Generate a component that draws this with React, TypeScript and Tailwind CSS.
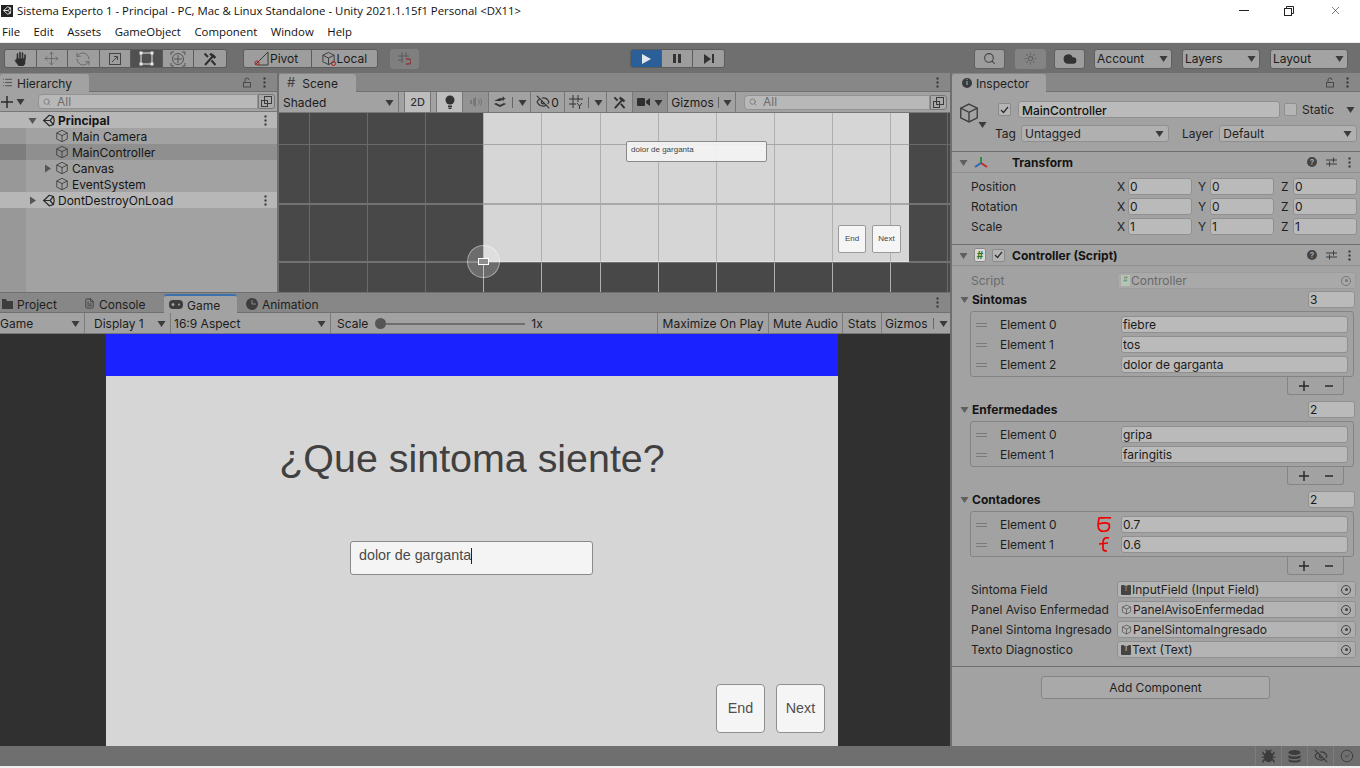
import type { ReactNode } from "react";
import {
  Bug,
  CircleCheck,
  Cloud,
  EyeOff,
  FileText,
  List,
  Move,
  RefreshCcw,
  Search,
  Sun,
  X,
} from "lucide-react";

function Tri({ dir = "down", className = "" }: { dir?: "down" | "right"; className?: string }) {
  return (
    <svg width="9" height="9" viewBox="0 0 9 9" className={className} fill="currentColor">
      {dir === "down" ? <path d="M0.5 2h8l-4 6z" /> : <path d="M2 0.5v8l6-4z" />}
    </svg>
  );
}

function Cube({ size = 16, className = "" }: { size?: number; className?: string }) {
  return (
    <svg width={size} height={size} viewBox="0 0 16 16" fill="none" stroke="currentColor" strokeWidth="1" className={className}>
      <path d="M8 1.5l6 3v7l-6 3-6-3v-7z" />
      <path d="M2 4.5l6 3 6-3M8 7.5v7" />
    </svg>
  );
}

function UnityIcon({ className = "" }: { className?: string }) {
  return (
    <svg width="13" height="13" viewBox="0 0 16 16" fill="none" stroke="currentColor" strokeWidth="1.5" className={className}>
      <path d="M9 1.5l5 1.5 1 5-1 5-5 1.5-7-6.5z" />
      <path d="M2 8h8l4-5M10 8l4 5" />
    </svg>
  );
}

function Dots({ className = "" }: { className?: string }) {
  return (
    <svg width="3" height="11" viewBox="0 0 3 11" fill="currentColor" className={className}>
      <rect x="0.5" y="0.5" width="2" height="2" />
      <rect x="0.5" y="4.5" width="2" height="2" />
      <rect x="0.5" y="8.5" width="2" height="2" />
    </svg>
  );
}

function ToolsIcon({ size = 14 }: { size?: number }) {
  return (
    <svg width={size} height={size} viewBox="0 0 14 14" fill="none" stroke="#2f2f2f">
      <path d="M2 13L11 3" strokeWidth="2" />
      <path d="M8 1l5 4-1.500 1.500-5-4z" fill="#2f2f2f" strokeWidth="0.500" />
      <path d="M1.500 1.500L5 5M8.500 8.500l4 4.500" strokeWidth="2" />
    </svg>
  );
}

function LockIcon() {
  return (
    <svg width="10" height="11" viewBox="0 0 10 11" fill="none" stroke="#4a4a4a" strokeWidth="1">
      <rect x="1.5" y="5.5" width="7" height="4.5" />
      <path d="M3 5.5V3a2 2 0 0 1 4 0" />
    </svg>
  );
}

function SearchField({ className = "" }: { className?: string }) {
  return (
    <div className={`flex items-center h-[15px] ${className}`}>
      <div className="flex-1 h-full bg-[#b8b8b8] border border-[#929292] rounded-l-[4px] flex items-center pl-[4px] gap-[6px] text-[#6c6c6c] text-[12px]">
        <Search size={8} strokeWidth={2} />
        <span className="leading-none">All</span>
      </div>
      <div className="w-[17px] h-full bg-[#a9a9a9] border border-[#777] rounded-r-[3px] flex items-center justify-center">
        <svg width="11" height="11" viewBox="0 0 11 11" fill="none" stroke="#3c3c3c" strokeWidth="1">
          <rect x="0.5" y="4.5" width="6" height="6" />
          <rect x="3.5" y="0.5" width="7" height="7" />
        </svg>
      </div>
    </div>
  );
}

function ToolBtn({ children, active, last }: { children: ReactNode; active?: boolean; last?: boolean }) {
  return (
    <div
      className={`w-[31.7px] h-full flex items-center justify-center ${last ? "" : "border-r border-[#5c5c5c]"} ${
        active ? "bg-[#505050] text-[#e8e8e8]" : "bg-[#9d9d9d] text-[#3a3a3a]"
      }`}
    >
      {children}
    </div>
  );
}

function TopDrop({ label, width }: { label: string; width: string }) {
  return (
    <div className={`${width} h-[20px] bg-[#a3a3a3] border border-[#606060] rounded-[3px] flex items-center justify-between pl-[2px] pr-[3px] text-[#1c1c1c]`}>
      <span>{label}</span>
      <Tri className="text-[#3b3b3b]" />
    </div>
  );
}

function Toolbar() {
  return (
    <div className="h-[30px] bg-[#6f6f6f] flex items-center pl-[4px] pt-[1px] shrink-0">
      <div className="flex h-[19px] w-[223px] border border-[#5c5c5c] rounded-[3px] overflow-hidden">
        <ToolBtn>
          <svg width="15" height="15" viewBox="0 0 15 15" fill="#2e2e2e" stroke="#2e2e2e" strokeLinecap="round">
            <path d="M4 7.500h8V13l-2 2H6L2 10z" strokeWidth="0.500" />
            <path d="M4.500 8V3M7 7V1.500M9.500 7V2M12 8V4" strokeWidth="1.600" />
          </svg>
        </ToolBtn>
        <ToolBtn><Move size={15} strokeWidth={1} className="text-[#555]" /></ToolBtn>
        <ToolBtn><RefreshCcw size={16} strokeWidth={1} className="text-[#555]" /></ToolBtn>
        <ToolBtn>
          <svg width="14" height="14" viewBox="0 0 14 14" fill="none" stroke="#444" strokeWidth="1">
            <rect x="1.5" y="1.5" width="11" height="11" />
            <path d="M4 10l5-5M6 4.5h3.500v3.500" />
          </svg>
        </ToolBtn>
        <ToolBtn active>
          <svg width="15" height="15" viewBox="0 0 15 15" fill="none" stroke="#e8e8e8" strokeWidth="1">
            <rect x="2" y="2" width="11" height="11" />
            <rect x="1" y="1" width="2" height="2" fill="#e8e8e8" />
            <rect x="12" y="1" width="2" height="2" fill="#e8e8e8" />
            <rect x="1" y="12" width="2" height="2" fill="#e8e8e8" />
            <rect x="12" y="12" width="2" height="2" fill="#e8e8e8" />
          </svg>
        </ToolBtn>
        <ToolBtn>
          <svg width="16" height="16" viewBox="0 0 16 16" fill="none" stroke="#555" strokeWidth="1">
            <circle cx="8" cy="8" r="5.500" />
            <path d="M8 4v8M4 8h8" />
            <path d="M1 4V1h3M12 1h3v3M1 12v3h3M15 12v3h-3" />
          </svg>
        </ToolBtn>
        <ToolBtn last><ToolsIcon /></ToolBtn>
      </div>

      <div className="flex h-[19px] w-[135px] ml-[16px] border border-[#5c5c5c] rounded-[3px] overflow-hidden text-[#1c1c1c]">
        <div className="flex-1 bg-[#9d9d9d] border-r border-[#5c5c5c] flex items-center pl-[10px] gap-[1px]">
          <svg width="15" height="15" viewBox="0 0 15 15" fill="none" strokeWidth="1">
            <path d="M1 14L14 1v13H4" stroke="#3a3a3a" />
            <circle cx="3" cy="12" r="2" stroke="#b01c1c" />
          </svg>
          <span className="pt-[1px]">Pivot</span>
        </div>
        <div className="flex-1 bg-[#9d9d9d] flex items-center pl-[9px] gap-[1px]">
          <span className="relative">
            <Cube size={15} className="text-[#3a3a3a]" />
            <span className="absolute right-0 bottom-0 w-[5px] h-[5px] rounded-full border border-[#b01c1c]" />
          </span>
          <span className="pt-[1px]">Local</span>
        </div>
      </div>

      <div className="w-[29px] h-[20px] ml-[12px] bg-[#7f7f7f] rounded-[3px] flex items-center justify-center">
        <svg width="13" height="13" viewBox="0 0 13 13" fill="none" strokeWidth="1">
          <path d="M4 0v11M8 0v5M0 4h11M0 8h5" stroke="#5c5c5c" />
          <path d="M8 7h2.500a2 2 0 0 1 0 5H8" stroke="#8b3b3b" strokeWidth="1.500" />
        </svg>
      </div>

      <div className="flex h-[19px] w-[95px] ml-[211px] border border-[#5c5c5c] rounded-[3px] overflow-hidden">
        <div className="w-[31px] bg-[#2a5f99] flex items-center justify-center border-r border-[#5c5c5c]">
          <svg width="9" height="10" viewBox="0 0 9 10" fill="#e2e8ef"><path d="M0 0l9 5-9 5z" /></svg>
        </div>
        <div className="w-[31px] bg-[#9d9d9d] flex items-center justify-center gap-[2px] border-r border-[#5c5c5c]">
          <span className="w-[3px] h-[9px] bg-[#333]" />
          <span className="w-[3px] h-[9px] bg-[#333]" />
        </div>
        <div className="flex-1 bg-[#9d9d9d] flex items-center justify-center gap-[1px]">
          <svg width="7" height="10" viewBox="0 0 7 10" fill="#333"><path d="M0 0l7 5-7 5z" /></svg>
          <span className="w-[2px] h-[9px] bg-[#333]" />
        </div>
      </div>

      <div className="w-[31px] h-[20px] ml-[249px] bg-[#9d9d9d] border border-[#606060] rounded-[3px] flex items-center justify-center">
        <Search size={13} className="text-[#444]" />
      </div>
      <div className="w-[31px] h-[20px] ml-[10px] bg-[#848484] rounded-[3px] flex items-center justify-center">
        <Sun size={13} className="text-[#636363]" />
      </div>
      <div className="w-[31px] h-[20px] ml-[8px] bg-[#9d9d9d] border border-[#606060] rounded-[3px] flex items-center justify-center">
        <Cloud size={14} fill="#333" className="text-[#333]" />
      </div>
      <div className="flex gap-[10px] ml-[9px]">
        <TopDrop label="Account" width="w-[78px]" />
        <TopDrop label="Layers" width="w-[78px]" />
        <TopDrop label="Layout" width="w-[78px]" />
      </div>
    </div>
  );
}

function Tab({ icon, label, className = "", accent }: { icon?: ReactNode; label: string; className?: string; accent?: boolean }) {
  return (
    <div
      className={`h-full flex items-center gap-[4px] rounded-t-[3px] text-[#1e1e1e] ${className} ${
        accent ? "bg-[#a2a2a2] border-t-2 border-[#3a72b0]" : ""
      }`}
    >
      {icon}
      <span className="pt-[2px]">{label}</span>
    </div>
  );
}

function HierarchyRow({
  label,
  indent,
  arrow,
  cube,
  bold,
  header,
  selected,
}: {
  label: string;
  indent: string;
  arrow?: "down" | "right";
  cube?: boolean;
  bold?: boolean;
  header?: boolean;
  selected?: boolean;
}) {
  return (
    <div className={`h-[16px] flex items-center ${header ? "bg-[#b7b7b7]" : selected ? "bg-[#8f8f8f]" : "bg-transparent"}`}>
      <div className={`w-[26px] h-full shrink-0 ${header ? "" : selected ? "bg-[#7d7d7d]" : "bg-[#989898]"}`} />
      <div className={`${indent} shrink-0 flex justify-end text-[#555]`}>{arrow && <Tri dir={arrow} />}</div>
      {cube ? <Cube size={14} className="text-[#3d3d3d] shrink-0" /> : <UnityIcon className="text-[#2b2b2b] shrink-0" />}
      <span className={`ml-[3px] pt-[1px] leading-none text-[#151515] ${bold ? "font-bold" : ""}`}>{label}</span>
      {header && <Dots className="ml-auto mr-[10px] text-[#333]" />}
    </div>
  );
}

function Hierarchy() {
  return (
    <div className="w-[277px] flex flex-col bg-[#a2a2a2]">
      <div className="h-[19px] bg-[#878787] flex items-center shrink-0 border-b border-[#707070]">
        <Tab className="bg-[#a2a2a2] w-[89px] pl-[2px] -mb-[1px] h-[20px]" label="Hierarchy" icon={<List size={11} className="text-[#4a4a4a]" />} />
        <div className="ml-auto mr-[11px] flex items-center gap-[11px]">
          <LockIcon />
          <Dots className="text-[#333]" />
        </div>
      </div>
      <div className="h-[20px] bg-[#a2a2a2] border-b border-[#777] flex items-center shrink-0">
        <svg width="12" height="12" viewBox="0 0 12 12" stroke="#2c2c2c" strokeWidth="1.500" className="ml-[1px]"><path d="M6 0v12M0 6h12" /></svg>
        <Tri className="ml-[3px] text-[#3a3a3a]" />
        <SearchField className="w-[237px] ml-[13px]" />
      </div>
      <div className="flex-1 flex flex-col">
        <HierarchyRow header bold label="Principal" indent="w-[16px] pr-[5px]" arrow="down" />
        <HierarchyRow cube label="Main Camera" indent="w-[29px]" />
        <HierarchyRow cube selected label="MainController" indent="w-[29px]" />
        <HierarchyRow cube label="Canvas" indent="w-[29px] pr-[3px]" arrow="right" />
        <HierarchyRow cube label="EventSystem" indent="w-[29px]" />
        <HierarchyRow header label="DontDestroyOnLoad" indent="w-[16px] pr-[5px]" arrow="right" />
        <div className="flex-1 flex">
          <div className="w-[26px] bg-[#989898]" />
        </div>
      </div>
    </div>
  );
}

const sceneCols = [30, 88, 146, 204, 262, 321, 379, 437, 495, 553, 611];

function SceneView() {
  return (
    <div className="relative flex-1 bg-[#484848] overflow-hidden">
      <div className="absolute left-[204px] top-0 w-[426px] h-[149px] bg-[#d6d6d6]" />
      {sceneCols.map((x) => (
        <div
          key={x}
          className={`absolute top-0 bottom-0 w-px ${x >= 204 && x < 630 ? "bg-[#b0b0b0]" : "bg-[#6a6a6a]"}`}
          style={{ left: x }}
        />
      ))}
      <div className="absolute left-0 right-0 top-[31px] h-px bg-[#6a6a6a]" />
      <div className="absolute left-0 right-0 top-[90px] h-[2px] bg-[#727272]" />
      <div className="absolute left-0 right-0 top-[148px] h-[2px] bg-[#727272]" />
      <div className="absolute left-[204px] w-[426px] top-[31px] h-px bg-[#a8a8a8]" />
      <div className="absolute left-[204px] w-[426px] top-[90px] h-[2px] bg-[#a8a8a8]" />
      <div className="absolute left-[204px] w-[426px] top-[148px] h-[1px] bg-[#e2e2e2]" />
      <div className="absolute left-[668px] top-0 bottom-0 w-px bg-[#6a6a6a]" />

      <div className="absolute left-[347px] top-[28px] w-[141px] h-[21px] bg-[#f4f4f4]/90 border border-[#8a8a8a] rounded-[2px] pl-[4px] text-[8px] leading-[15px] text-[#444] font-['Liberation_Sans',sans-serif]">
        dolor de garganta
      </div>
      <div className="absolute left-[559px] top-[112px] w-[28px] h-[28px] bg-[#f5f5f5] border border-[#999] rounded-[2px] flex items-center justify-center text-[8px] text-[#444] font-['Liberation_Sans',sans-serif]">
        End
      </div>
      <div className="absolute left-[593px] top-[112px] w-[29px] h-[28px] bg-[#f5f5f5] border border-[#999] rounded-[2px] flex items-center justify-center text-[8px] text-[#444] font-['Liberation_Sans',sans-serif]">
        Next
      </div>
      <div className="absolute left-[188px] top-[132px] w-[33px] h-[33px] rounded-full bg-white/20 border border-white/40" />
      <div className="absolute left-[199px] top-[145px] w-[11px] h-[7px] border border-white bg-[#8d8d8d]" />
    </div>
  );
}

function SceneBar({ children, className = "" }: { children: ReactNode; className?: string }) {
  return <div className={`h-full flex items-center justify-center border-r border-[#777] ${className}`}>{children}</div>;
}

function Scene() {
  return (
    <div className="flex-1 flex flex-col">
      <div className="h-[19px] bg-[#878787] flex items-center shrink-0 border-b border-[#707070]">
        <Tab className="bg-[#a2a2a2] w-[77px] pl-[8px] -mb-[1px] h-[20px]" label="Scene" icon={<span className="text-[13px] leading-none text-[#3d3d3d] mr-[3px]">#</span>} />
        <Dots className="ml-auto mr-[11px] text-[#333]" />
      </div>
      <div className="h-[21px] bg-[#a2a2a2] border-b border-[#777] flex items-center shrink-0 text-[#1c1c1c]">
        <SceneBar className="w-[120px] !justify-between pl-[4px] pr-[4px]">
          <span className="pt-[1px]">Shaded</span>
          <Tri className="text-[#3b3b3b]" />
        </SceneBar>
        <div className="w-[6px] h-full border-r border-[#777]" />
        <SceneBar className="w-[26px] bg-[#bdbdbd] font-medium text-[11px] text-[#333]">2D</SceneBar>
        <div className="w-[6px] h-full border-r border-[#777]" />
        <SceneBar className="w-[26px] bg-[#bdbdbd]">
          <svg width="10" height="14" viewBox="0 0 10 14" fill="#333"><circle cx="5" cy="5" r="4.500" /><rect x="3" y="10.500" width="4" height="1.500" /><rect x="3.500" y="12.500" width="3" height="1.500" /></svg>
        </SceneBar>
        <SceneBar className="w-[26px] bg-[#939393]">
          <svg width="12" height="10" viewBox="0 0 12 10" fill="#777"><path d="M0 3h2v4H0zM3 2l3-2v10L3 8z" /><path d="M8 2a4 4 0 0 1 0 6M10 1a6 6 0 0 1 0 8" fill="none" stroke="#777" /></svg>
        </SceneBar>
        <SceneBar className="w-[42px] gap-[5px]">
          <svg width="14" height="12" viewBox="0 0 14 12" fill="#333"><path d="M1 5l6-3 3 1.500L7 5zM1 8l6 3 6-3-2-1-4 2-4-2z" /><path d="M10 0l1 2 2 .5-2 1-1 2-.5-2-2-1 2-.5z" /></svg>
          <span className="w-px h-[11px] bg-[#666]" />
          <Tri className="text-[#3b3b3b]" />
        </SceneBar>
        <SceneBar className="w-[34px] gap-[1px]">
          <EyeOff size={14} className="text-[#333]" />
          <span className="pt-[1px]">0</span>
        </SceneBar>
        <SceneBar className="w-[42px] gap-[5px]">
          <svg width="14" height="14" viewBox="0 0 14 14" fill="none" stroke="#333"><path d="M4 0v13M9 0v7M0 4h14M0 9h7M8 8l2.500 3L13 8M10.500 11v3" /></svg>
          <span className="w-px h-[11px] bg-[#666]" />
          <Tri className="text-[#3b3b3b]" />
        </SceneBar>
        <SceneBar className="w-[26px]"><ToolsIcon size={13} /></SceneBar>
        <SceneBar className="w-[35px] bg-[#8f8f8f] gap-[4px]">
          <svg width="13" height="10" viewBox="0 0 13 10" fill="#2f2f2f"><rect x="0" y="1" width="8" height="8" rx="1" /><path d="M9 4l4-3v8l-4-3z" /></svg>
          <Tri className="text-[#333]" />
        </SceneBar>
        <SceneBar className="w-[68px] gap-[4px]">
          <span className="pt-[1px]">Gizmos</span>
          <span className="w-px h-[11px] bg-[#666]" />
          <Tri className="text-[#3b3b3b]" />
        </SceneBar>
        <SearchField className="w-[203px] ml-[8px]" />
      </div>
      <SceneView />
    </div>
  );
}

function GameBar({ children, className = "" }: { children: ReactNode; className?: string }) {
  return <div className={`h-full flex items-center pt-[1px] border-r border-[#7c7c7c] ${className}`}>{children}</div>;
}

function Game() {
  return (
    <div className="flex-1 flex flex-col min-h-0">
      <div className="h-[20px] bg-[#878787] flex items-center shrink-0 border-b border-[#707070]">
        <Tab className="w-[84px] pl-[2px] pt-[2px]" label="Project" icon={<svg width="11" height="10" viewBox="0 0 11 10" fill="#3d3d3d"><path d="M0 0h4l1 2h6v8H0z" /></svg>} />
        <Tab className="w-[80px] pt-[2px]" label="Console" icon={<FileText size={11} className="text-[#3d3d3d]" />} />
        <Tab accent className="w-[73px] pl-[5px] pt-[1px] -mb-[1px] h-[21px]" label="Game" icon={
          <svg width="14" height="9" viewBox="0 0 14 9" fill="#3d3d3d"><rect x="0" y="0" width="14" height="9" rx="4" /><circle cx="4" cy="4.500" r="1.500" fill="#a2a2a2" /><circle cx="10" cy="4.500" r="1" fill="#a2a2a2" /></svg>
        } />
        <Tab className="pl-[9px] pt-[2px]" label="Animation" icon={
          <svg width="12" height="12" viewBox="0 0 12 12"><circle cx="6" cy="6" r="6" fill="#3d3d3d" /><path d="M6 2v4h4" stroke="#8a8a8a" fill="none" /></svg>
        } />
        <Dots className="ml-auto mr-[11px] text-[#333]" />
      </div>
      <div className="h-[21px] bg-[#a2a2a2] border-b border-[#777] flex items-center shrink-0 text-[#1c1c1c]">
        <GameBar className="w-[85px] justify-between pr-[4px]">
          <span>Game</span>
          <Tri className="text-[#3b3b3b]" />
        </GameBar>
        <GameBar className="w-[86px] justify-between pl-[9px] pr-[4px]">
          <span>Display 1</span>
          <Tri className="text-[#3b3b3b]" />
        </GameBar>
        <GameBar className="w-[160px] justify-between pl-[3px] pr-[4px]">
          <span>16:9 Aspect</span>
          <Tri className="text-[#3b3b3b]" />
        </GameBar>
        <GameBar className="w-[327px] pl-[6px]">
          <span>Scale</span>
          <span className="ml-[7px] w-[11px] h-[11px] rounded-full bg-[#555] shrink-0" />
          <span className="w-[139px] h-[2px] bg-[#6e6e6e]" />
          <span className="ml-[6px]">1x</span>
        </GameBar>
        <GameBar className="w-[111px] justify-center">Maximize On Play</GameBar>
        <GameBar className="w-[74px] justify-center">Mute Audio</GameBar>
        <GameBar className="w-[39px] justify-center">Stats</GameBar>
        <div className="flex-1 h-full flex items-center pt-[1px] pl-[3px] gap-[5px]">
          <span>Gizmos</span>
          <span className="w-px h-[11px] bg-[#666]" />
          <Tri className="text-[#3b3b3b]" />
        </div>
      </div>
      <div className="flex-1 bg-[#303030] flex justify-center pr-[6px] min-h-0">
        <div className="w-[732px] bg-[#d6d6d6] flex flex-col font-['Liberation_Sans',sans-serif]">
          <div className="h-[42px] bg-[#1a22ff] shrink-0" />
          <h1 className="mt-[56px] text-center text-[39.400px] leading-[52px] text-[#404040]">¿Que sintoma siente?</h1>
          <div className="mt-[57px] ml-[244px] w-[243px] h-[34px] bg-[#f4f4f4] border border-[#8a8a8a] rounded-[3px] flex items-center pl-[8px] pb-[4px] text-[14.300px] text-[#4a4a4a]">
            dolor de garganta
            <span className="w-px h-[16px] bg-[#222]" />
          </div>
          <div className="mt-auto mb-[13px] mr-[13px] flex justify-end gap-[11px]">
            <div className="w-[49px] h-[49px] bg-[#f5f5f5] border border-[#8f8f8f] rounded-[4px] flex items-center justify-center text-[14.300px] text-[#4f4f4f]">End</div>
            <div className="w-[49px] h-[49px] bg-[#f5f5f5] border border-[#8f8f8f] rounded-[4px] flex items-center justify-center text-[14.300px] text-[#4f4f4f]">Next</div>
          </div>
        </div>
      </div>
    </div>
  );
}

function Field({ value, className = "", bold }: { value?: string; className?: string; bold?: boolean }) {
  return (
    <div className={`h-[17px] bg-[#bababa] border border-[#909090] rounded-[3px] flex items-center pl-[1px] pt-[1px] text-[#1a1a1a] leading-none overflow-hidden ${bold ? "font-medium pt-[2px]" : ""} ${className}`}>
      {value}
    </div>
  );
}

function Check() {
  return (
    <svg width="9" height="8" viewBox="0 0 9 8" fill="none" stroke="#2c2c2c" strokeWidth="1.200"><path d="M1 4l2.500 2.500L8 1" /></svg>
  );
}

function CompHeader({ icon, label, check }: { icon: ReactNode; label: string; check?: boolean }) {
  return (
    <div className="h-[21px] border-b border-[#8f8f8f] flex items-center pl-[7px]">
      <Tri className="text-[#5f5f5f]" />
      <div className="w-[17px] ml-[6px] flex justify-start">{icon}</div>
      {check ? (
        <div className="w-[13px] h-[13px] ml-[1px] bg-[#b5b5b5] border border-[#8a8a8a] rounded-[2px] flex items-center justify-center">
          <Check />
        </div>
      ) : (
        <div className="w-[14px]" />
      )}
      <span className="ml-[7px] pt-[1px] font-bold text-[#141414]">{label}</span>
      <div className="ml-auto mr-[9px] flex items-center gap-[9px]">
        <span className="w-[10px] h-[10px] rounded-full bg-[#444] text-[#a2a2a2] text-[8px] font-bold flex items-center justify-center leading-none">?</span>
        <svg width="11" height="10" viewBox="0 0 11 10" stroke="#3d3d3d" fill="none"><path d="M0 3h11M0 7h11M7.500 0.500v5M3.500 4.500v5" /></svg>
        <Dots className="text-[#333] ml-[2px]" />
      </div>
    </div>
  );
}

function Vec3({ label, x, y, z }: { label: string; x: string; y: string; z: string }) {
  return (
    <div className="h-[17px] mb-[3px] flex items-center text-[#1f1f1f]">
      <span className="w-[165px] pl-[19px] pt-[1px]">{label}</span>
      <span className="w-[11px] pt-[1px]">X</span>
      <Field value={x} className="w-[64px]" />
      <span className="w-[12px] ml-[6px] pt-[1px]">Y</span>
      <Field value={y} className="w-[64px]" />
      <span className="w-[12px] ml-[7px] pt-[1px]">Z</span>
      <Field value={z} className="w-[64px]" />
    </div>
  );
}

function ListSection({ title, size, items, marks }: { title: string; size: string; items: string[]; marks?: boolean }) {
  return (
    <div className="pr-[5px]">
      <div className="h-[18px] flex items-center pl-[8px]">
        <Tri className="text-[#5f5f5f]" />
        <span className="ml-[3px] pt-[1px] font-bold text-[#141414]">{title}</span>
        <Field value={size} className="ml-auto w-[47px]" />
      </div>
      <div className="ml-[18px] mr-[1px] mt-[3px] border border-[#848484] rounded-[3px] pt-[4px]">
        {items.map((item, i) => (
          <div key={i} className="h-[17px] mb-[3px] flex items-center text-[#1f1f1f] relative">
            <span className="ml-[5px] w-[11px] h-[4px] border-y border-[#7a7a7a]" />
            <span className="ml-[13px] w-[121px] pt-[1px]">Element {i}</span>
            <Field value={item} className="flex-1 mr-[5px]" />
            {marks && (
              <svg width="15" height="16" viewBox="0 0 15 16" fill="none" stroke="#f00000" strokeWidth="1.700" className="absolute left-[126px] top-[1px]">
                {i === 0 ? (
                  <path d="M14 1C10 0 5 1 2 1L1 8c0 5 3 7 7 6 4 0 5-4 4-7-3-2-7-1-10 0" />
                ) : (
                  <path d="M12 1C8 0 6 2 6 5v7c0 2 2 2 4 2M2 7l9-1" />
                )}
              </svg>
            )}
          </div>
        ))}
      </div>
      <div className="ml-[335px] w-[57px] h-[18px] border border-t-0 border-[#848484] rounded-b-[3px] flex items-center justify-center gap-[15px] text-[#2a2a2a]">
        <svg width="10" height="10" viewBox="0 0 10 10" stroke="#2a2a2a" strokeWidth="1.500"><path d="M5 0v10M0 5h10" /></svg>
        <svg width="9" height="10" viewBox="0 0 9 10" stroke="#2a2a2a" strokeWidth="1.500"><path d="M1 5h8" /></svg>
      </div>
    </div>
  );
}

function RefRow({ label, value, icon }: { label: string; value: string; icon: ReactNode }) {
  return (
    <div className="h-[17px] mb-[3px] flex items-center text-[#1f1f1f]">
      <span className="w-[165px] pl-[19px] pt-[1px] shrink-0 whitespace-nowrap">{label}</span>
      <div className="w-[239px] h-full bg-[#b4b4b4] border border-[#909090] rounded-[3px] flex items-center relative pl-[3px] gap-[1px]">
        {icon}
        <span className="leading-none pt-[1px]">{value}</span>
        <div className="absolute right-0 top-0 bottom-0 w-[18px] bg-[#adadad] rounded-r-[3px] flex items-center justify-center">
          <span className="w-[10px] h-[10px] rounded-full border border-[#444] flex items-center justify-center">
            <span className="w-[3px] h-[3px] rounded-full bg-[#444]" />
          </span>
        </div>
      </div>
    </div>
  );
}

function Inspector() {
  const small = "text-[#4a4a4a] shrink-0";
  return (
    <div className="w-[408px] flex flex-col bg-[#a2a2a2] shrink-0">
      <div className="h-[19px] bg-[#878787] flex items-center shrink-0 border-b border-[#707070]">
        <Tab
          className="bg-[#a2a2a2] w-[94px] pl-[10px] -mb-[1px] h-[20px]"
          label="Inspector"
          icon={<span className="w-[10px] h-[10px] rounded-full bg-[#3a3a3a] text-[#a2a2a2] text-[7px] font-bold flex items-center justify-center leading-none">i</span>}
        />
        <div className="ml-auto mr-[11px] flex items-center gap-[11px]">
          <LockIcon />
          <Dots className="text-[#333]" />
        </div>
      </div>

      <div className="h-[60px] border-b border-[#6f6f6f] relative shrink-0 text-[#1f1f1f]">
        <div className="flex items-center h-[17px] mt-[9px]">
          <Cube size={22} className="ml-[6px] text-[#3d3d3d] relative top-[3px]" />
          <div className="w-[13px] h-[13px] ml-[18px] bg-[#b5b5b5] border border-[#8a8a8a] rounded-[2px] flex items-center justify-center">
            <Check />
          </div>
          <Field value="MainController" bold className="w-[262px] ml-[7px] pl-[3px] text-[#111]" />
          <div className="w-[13px] h-[13px] ml-[4px] bg-[#b5b5b5] border border-[#8f8f8f] rounded-[2px]" />
          <span className="ml-[5px] pt-[1px]">Static</span>
          <Tri className="ml-[12px] text-[#3b3b3b]" />
        </div>
        <Tri className="absolute left-[26px] top-[28px] text-[#3b3b3b]" />
        <div className="flex items-center h-[17px] mt-[7px]">
          <span className="ml-[43px] pt-[1px]">Tag</span>
          <div className="w-[148px] h-[17px] ml-[5px] bg-[#b0b0b0] border border-[#8f8f8f] rounded-[3px] flex items-center justify-between pl-[3px] pr-[4px]">
            <span className="pt-[1px]">Untagged</span>
            <Tri className="text-[#3b3b3b]" />
          </div>
          <span className="ml-[13px] pt-[1px]">Layer</span>
          <div className="w-[138px] h-[17px] ml-[6px] bg-[#b0b0b0] border border-[#8f8f8f] rounded-[3px] flex items-center justify-between pl-[3px] pr-[4px]">
            <span className="pt-[1px]">Default</span>
            <Tri className="text-[#3b3b3b]" />
          </div>
        </div>
      </div>

      <CompHeader
        label="Transform"
        icon={
          <svg width="14" height="13" viewBox="0 0 14 13" fill="none" strokeWidth="2">
            <path d="M7 7V1" stroke="#2f8f3a" />
            <path d="M7 7l-6 4" stroke="#2b66b5" />
            <path d="M7 7l6 4" stroke="#c12a2a" />
          </svg>
        }
      />
      <div className="h-[72px] border-b border-[#6f6f6f] pt-[5px] shrink-0">
        <Vec3 label="Position" x="0" y="0" z="0" />
        <Vec3 label="Rotation" x="0" y="0" z="0" />
        <Vec3 label="Scale" x="1" y="1" z="1" />
      </div>

      <CompHeader
        check
        label="Controller (Script)"
        icon={
          <span className="w-[12px] h-[14px] bg-[#d8d8d8] border border-[#8a8a8a] rounded-[2px] text-[#1e7a2e] text-[10px] font-bold flex items-center justify-center leading-none">#</span>
        }
      />
      <div className="pt-[6px] shrink-0">
        <div className="h-[17px] mb-[1px] flex items-center text-[#6a6a6a]">
          <span className="w-[165px] pl-[19px] shrink-0">Script</span>
          <div className="w-[239px] h-full bg-[#a9a9a9] border border-[#9c9c9c] rounded-[3px] flex items-center pl-[3px] gap-[1px] relative">
            <span className="w-[9px] h-[11px] bg-[#b5c5b5] text-[7px] text-[#5d8a5d] flex items-center justify-center">#</span>
            <span>Controller</span>
            <span className="absolute right-[4px] w-[10px] h-[10px] rounded-full border border-[#777] flex items-center justify-center">
              <span className="w-[3px] h-[3px] rounded-full bg-[#777]" />
            </span>
          </div>
        </div>
        <ListSection title="Sintomas" size="3" items={["fiebre", "tos", "dolor de garganta"]} />
        <div className="h-[5px]" />
        <ListSection title="Enfermedades" size="2" items={["gripa", "faringitis"]} />
        <div className="h-[5px]" />
        <ListSection title="Contadores" size="2" items={["0.7", "0.6"]} marks />
        <div className="h-[6px]" />
        <RefRow label="Sintoma Field" value="InputField (Input Field)" icon={<span className="w-[10px] h-[10px] bg-[#444] rounded-[1px] text-[#aaa] text-[7px] flex items-center justify-center shrink-0">T</span>} />
        <RefRow label="Panel Aviso Enfermedad" value="PanelAvisoEnfermedad" icon={<Cube size={11} className={small} />} />
        <RefRow label="Panel Sintoma Ingresado" value="PanelSintomaIngresado" icon={<Cube size={11} className={small} />} />
        <RefRow label="Texto Diagnostico" value="Text (Text)" icon={<span className="w-[10px] h-[10px] bg-[#444] rounded-[1px] text-[#aaa] text-[7px] font-bold flex items-center justify-center shrink-0">T</span>} />
      </div>
      <div className="mt-[5px] border-t border-[#6f6f6f] flex justify-center pt-[9px] pr-[1px]">
        <div className="w-[229px] h-[23px] bg-[#a9a9a9] border border-[#858585] rounded-[3px] flex items-center justify-center pt-[1px] text-[#1f1f1f]">
          Add Component
        </div>
      </div>
    </div>
  );
}

function StatusBar() {
  return (
    <div className="h-[20px] bg-[#6f6f6f] flex justify-end items-center shrink-0">
      {[
        <Bug key="b" size={15} fill="#3c3c3c" className="text-[#3c3c3c]" />,
        <svg key="d" width="13" height="13" viewBox="0 0 13 13" fill="#3c3c3c"><ellipse cx="6.500" cy="2.500" rx="6" ry="2.500" /><path d="M0.500 5c2 2 10 2 12 0v2.500c-2 2-10 2-12 0zM0.500 9c2 2 10 2 12 0v2c-2 2-10 2-12 0z" /></svg>,
        <EyeOff key="e" size={14} className="text-[#3c3c3c]" />,
        <CircleCheck key="c" size={14} strokeWidth={1.500} className="text-[#3c3c3c]" />,
      ].map((icon) => (
        <div key={icon.key} className="w-[26px] h-full border-l border-[#7c7c7c] flex items-center justify-center">
          {icon}
        </div>
      ))}
      <div className="w-[1px]" />
    </div>
  );
}

export default function App() {
  return (
    <div className="w-[1360px] h-[768px] overflow-hidden flex flex-col bg-white font-['Inter',sans-serif] text-[12px]">
      <div className="h-[21px] flex items-center shrink-0 pl-[1px] relative font-['Open_Sans',sans-serif] text-[11.400px] text-[#111]">
        <span className="w-[12px] h-[12px] bg-[#222] flex items-center justify-center">
          <UnityIcon className="text-white scale-75" />
        </span>
        <span className="ml-[4px]">Sistema Experto 1 - Principal - PC, Mac &amp; Linux Standalone - Unity 2021.1.15f1 Personal &lt;DX11&gt;</span>
        <div className="ml-auto flex items-center text-[#222]">
          <span className="w-[10px] h-px bg-[#222] mr-[35px]" />
          <svg width="10" height="10" viewBox="0 0 10 10" fill="none" stroke="#222" className="mr-[35px]">
            <rect x="0.500" y="2.500" width="7" height="7" />
            <path d="M2.500 2.500v-2h7v7h-2" />
          </svg>
          <X size={13} strokeWidth={1} className="mr-[18px] text-[#111]" />
        </div>
      </div>
      <div className="h-[21px] flex items-center shrink-0 gap-[13.500px] pl-[2px] font-['Open_Sans',sans-serif] text-[11.400px] text-[#111]">
        {["File", "Edit", "Assets", "GameObject", "Component", "Window", "Help"].map((m) => (
          <span key={m}>{m}</span>
        ))}
      </div>
      <div className="h-px bg-[#ececec] shrink-0" />
      <Toolbar />
      <div className="h-[673px] shrink-0 flex gap-[2px] bg-[#6f6f6f]">
        <div className="w-[950px] flex flex-col gap-[1px]">
          <div className="h-[219px] flex gap-[2px] shrink-0">
            <Hierarchy />
            <Scene />
          </div>
          <Game />
        </div>
        <Inspector />
      </div>
      <StatusBar />
      <div className="flex-1 bg-[#f0f0f0]" />
    </div>
  );
}
